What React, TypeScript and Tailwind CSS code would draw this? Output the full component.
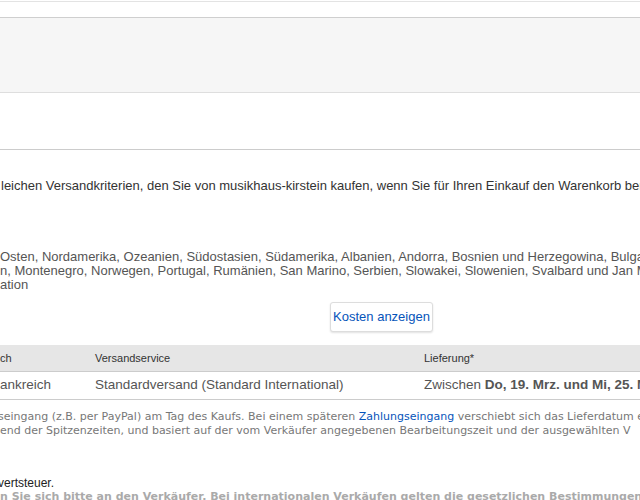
const arial = { fontFamily: '"Liberation Sans", Arial, sans-serif' };
const verdana = { fontFamily: '"DejaVu Sans", Verdana, sans-serif' };

export default function App() {
  return (
    <div className="w-[640px] h-[500px] overflow-hidden bg-white relative" style={arial}>
      <div className="h-px" />
      <div className="h-px bg-[#e3e3e3]" />
      <div className="h-[15px]" />
      <div className="h-[76px] bg-[#f6f6f6] border-t border-[#cfcfcf] border-b border-b-[#dedede]" />
      <div className="h-[57px] border-b border-[#cccccc]" />

      <p className="mt-[28px] h-4 leading-4 text-[13px] text-[#333] whitespace-nowrap overflow-hidden pl-px">
        leichen Versandkriterien, den Sie von musikhaus-kirstein kaufen, wenn Sie für Ihren Einkauf den Warenkorb ber
      </p>

      <div className="mt-[56px] text-[13px] leading-[14px] text-[#555] whitespace-nowrap overflow-hidden">
        <p>Osten, Nordamerika, Ozeanien, Südostasien, Südamerika, Albanien, Andorra, Bosnien und Herzegowina, Bulga</p>
        <p>n, Montenegro, Norwegen, Portugal, Rumänien, San Marino, Serbien, Slowakei, Slowenien, Svalbard und Jan M</p>
        <p>ation</p>
      </div>

      <div className="mt-[10px] pl-[330px]">
        <button
          type="button"
          className="w-[103px] h-[30px] bg-white border border-[#dddddd] rounded-[3px] shadow-[0_1px_2px_rgba(0,0,0,0.12)] text-[13px] text-[#0654ba]"
        >
          Kosten anzeigen
        </button>
      </div>

      <div className="mt-[13px] w-full overflow-hidden">
        <div className="flex h-[27px] items-center bg-[#e6e6e6] border-b border-[#cccccc] text-[11px] text-[#333]">
          <span className="w-[95px] shrink-0">ch</span>
          <span className="w-[329px] shrink-0">Versandservice</span>
          <span className="shrink-0">Lieferung*</span>
        </div>
        <div className="flex h-[28px] items-center border-b border-[#cccccc] text-[13.5px] text-[#555] whitespace-nowrap">
          <span className="w-[95px] shrink-0">ankreich</span>
          <span className="w-[329px] shrink-0">Standardversand (Standard International)</span>
          <span className="shrink-0">
            Zwischen <b className="text-[#555]">Do, 19. Mrz. und Mi, 25. M</b>
          </span>
        </div>
      </div>

      <div className="mt-[10px] text-[11px] leading-[13.5px] text-[#777] whitespace-nowrap overflow-hidden" style={verdana}>
        <p className="-ml-[2px]">
          seingang (z.B. per PayPal) am Tag des Kaufs. Bei einem späteren{' '}
          <span className="text-[#0654ba]">Zahlungseingang</span> verschiebt sich das Lieferdatum e
        </p>
        <p>end der Spitzenzeiten, und basiert auf der vom Verkäufer angegebenen Bearbeitungszeit und der ausgewählten V</p>
      </div>

      <p className="mt-[39px] text-[12px] leading-[14px] text-[#222] whitespace-nowrap -ml-[2px]">vertsteuer.</p>
      <p className="text-[11px] leading-[13px] font-bold text-[#aaa] whitespace-nowrap overflow-hidden" style={verdana}>
        n Sie sich bitte an den Verkäufer. Bei internationalen Verkäufen gelten die gesetzlichen Bestimmungen.
      </p>
    </div>
  );
}
